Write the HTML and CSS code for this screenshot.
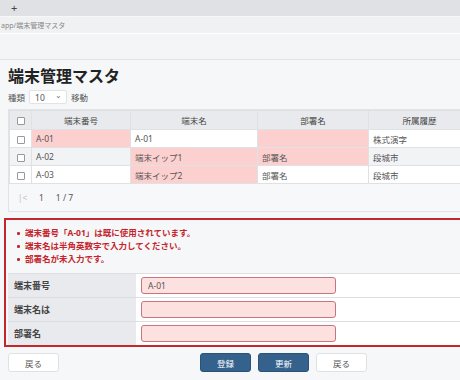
FILE: index.html
```html
<!DOCTYPE html>
<html lang="ja">
<head>
    <meta charset="UTF-8">
    <title>端末管理マスタ</title>
    <link rel="stylesheet" href="styles.css">
</head>
<body>
    <div class="tabbar"><span class="plus">+</span></div>
    <div class="addr">app/端末管理マスタ</div>
    <div class="toolbar"></div>

    <div class="main">
        <h1>端末管理マスタ</h1>
        <div class="controls">
            <span>種類</span>
            <div class="select">10 <span class="caret">⌄</span></div>
            <span>移動</span>
        </div>

        <div class="grid">
            <table>
                <thead>
                    <tr>
                        <th class="chk"><span class="box"></span></th>
                        <th class="c2">端末番号</th>
                        <th class="c3">端末名</th>
                        <th class="c4">部署名</th>
                        <th class="c5">所属履歴</th>
                    </tr>
                </thead>
                <tbody>
                    <tr>
                        <td class="chk"><span class="box"></span></td>
                        <td class="err">A-01</td>
                        <td>A-01</td>
                        <td class="err"></td>
                        <td>株式演字</td>
                    </tr>
                    <tr class="alt">
                        <td class="chk"><span class="box"></span></td>
                        <td>A-02</td>
                        <td class="err">端末イップ1</td>
                        <td class="err">部署名</td>
                        <td>段城市</td>
                    </tr>
                    <tr>
                        <td class="chk"><span class="box"></span></td>
                        <td>A-03</td>
                        <td class="err">端末イップ2</td>
                        <td>部署名</td>
                        <td>段城市</td>
                    </tr>
                </tbody>
            </table>
            <div class="pager">
                <span class="first">|&lt;</span>
                <span>1</span>
                <span>1 / 7</span>
            </div>
        </div>

        <div class="errbox">
            <ul class="messages">
                <li>端末番号「A-01」は既に使用されています。</li>
                <li>端末名は半角英数字で入力してください。</li>
                <li>部署名が未入力です。</li>
            </ul>
            <div class="form-row">
                <div class="label">端末番号</div>
                <div class="field"><div class="input">A-01</div></div>
            </div>
            <div class="form-row">
                <div class="label">端末名は</div>
                <div class="field"><div class="input"></div></div>
            </div>
            <div class="form-row">
                <div class="label">部署名</div>
                <div class="field"><div class="input"></div></div>
            </div>
        </div>

        <div class="actions">
            <button class="btn">戻る</button>
            <div class="right">
                <button class="btn primary">登録</button>
                <button class="btn primary">更新</button>
                <button class="btn">戻る</button>
            </div>
        </div>
    </div>
</body>
</html>
```

FILE: styles.css
```css
* {
    margin: 0;
    padding: 0;
    box-sizing: border-box;
    font-family: 'Noto Sans', 'Noto Sans CJK JP', sans-serif;
}

body {
    background: #f6f7f8;
    width: 460px;
    height: 380px;
    overflow: hidden;
    color: #333;
}

.tabbar {
    height: 16px;
    background: #dfe1e5;
    padding-left: 11px;
    font-size: 11px;
    line-height: 16px;
    color: #444;
}

.addr {
    height: 17px;
    margin-top: 1px;
    background: #f0f1f3;
    font-size: 7px;
    line-height: 17px;
    color: #888;
    padding-left: 1px;
    border-bottom: 1px solid #fff;
}

.toolbar {
    height: 26px;
    background: #f4f5f6;
    border-bottom: 1px solid #e3e4e6;
}

.main {
    width: 480px;
    padding: 0 8px;
}

h1 {
    font-size: 16px;
    font-weight: 700;
    color: #222;
    margin-top: 3px;
    height: 26px;
    line-height: 26px;
}

.controls {
    display: flex;
    align-items: center;
    gap: 4px;
    font-size: 8.5px;
    color: #555;
    height: 16px;
}

.select {
    width: 38px;
    height: 14px;
    background: #fff;
    border: 1px solid #e2e3e5;
    border-radius: 2px;
    padding-left: 5px;
    display: flex;
    align-items: center;
    justify-content: space-between;
    padding-right: 4px;
}

.caret {
    font-size: 8px;
    line-height: 8px;
    margin-top: -4px;
    color: #777;
}

.grid {
    margin-top: 4px;
    border: 1px solid #e1e3e6;
    background: #f7f8f9;
}

table {
    border-collapse: collapse;
    width: 100%;
    font-size: 8.5px;
    color: #555;
}

th, td {
    border: 1px solid #dfe1e4;
    height: 18px;
    padding: 0 4px;
    text-align: left;
    font-weight: 400;
}

th {
    height: 19px;
    background: #e8eaed;
    text-align: center;
    color: #444;
}

td {
    background: #fff;
}

tr.alt td {
    background: #f2f3f5;
}

td.err, tr.alt td.err {
    background: #fdd0d0;
}

.chk {
    width: 22px;
    padding: 0;
    text-align: center;
}

.c2 { width: 99px; }
.c3 { width: 127px; }
.c4 { width: 111px; }

.box {
    display: inline-block;
    width: 8px;
    height: 8px;
    border: 1px solid #999;
    border-radius: 1px;
    background: #fff;
    vertical-align: middle;
}

.pager {
    height: 27px;
    display: flex;
    align-items: center;
    gap: 12px;
    padding-left: 9px;
    font-size: 8.5px;
    color: #555;
}

.pager .first {
    color: #bbb;
    font-size: 8px;
}

.errbox {
    margin: 6px 0 0 -4px;
    border: 2px solid #c6262e;
    background: #f6f7f8;
    padding: 6px 0 0 2px;
}

.messages {
    list-style: none;
    padding-left: 17px;
    margin-bottom: 8px;
}

.messages li {
    font-size: 8.5px;
    font-weight: 700;
    color: #c4252c;
    line-height: 13px;
    position: relative;
}

.messages li::before {
    content: '';
    position: absolute;
    left: -8px;
    top: 6px;
    width: 2.5px;
    height: 2.5px;
    border-radius: 50%;
    background: #c4252c;
}

.form-row {
    display: flex;
    height: 24px;
    border-top: 1px solid #dcdee1;
}

.label {
    width: 128px;
    background: #e8eaed;
    font-size: 9px;
    font-weight: 700;
    color: #444;
    padding-left: 6px;
    display: flex;
    align-items: center;
}

.field {
    flex: 1;
    background: #fff;
    padding-left: 5px;
    display: flex;
    align-items: center;
}

.input {
    width: 195px;
    height: 17px;
    background: #fde1e1;
    border: 1px solid #c7747a;
    border-radius: 3px;
    font-size: 8.5px;
    color: #555;
    padding-left: 6px;
    line-height: 15px;
}

.actions {
    display: flex;
    margin-top: 6px;
    width: 444px;
}

.right {
    display: flex;
    gap: 7px;
    margin-left: 141px;
}

.btn {
    width: 51px;
    height: 19px;
    font-size: 8.5px;
    border: 1px solid #e0e1e3;
    border-radius: 3px;
    background: #fff;
    color: #555;
    cursor: pointer;
}

.btn.primary {
    background: #34628c;
    border-color: #2b5277;
    color: #fff;
}
```
